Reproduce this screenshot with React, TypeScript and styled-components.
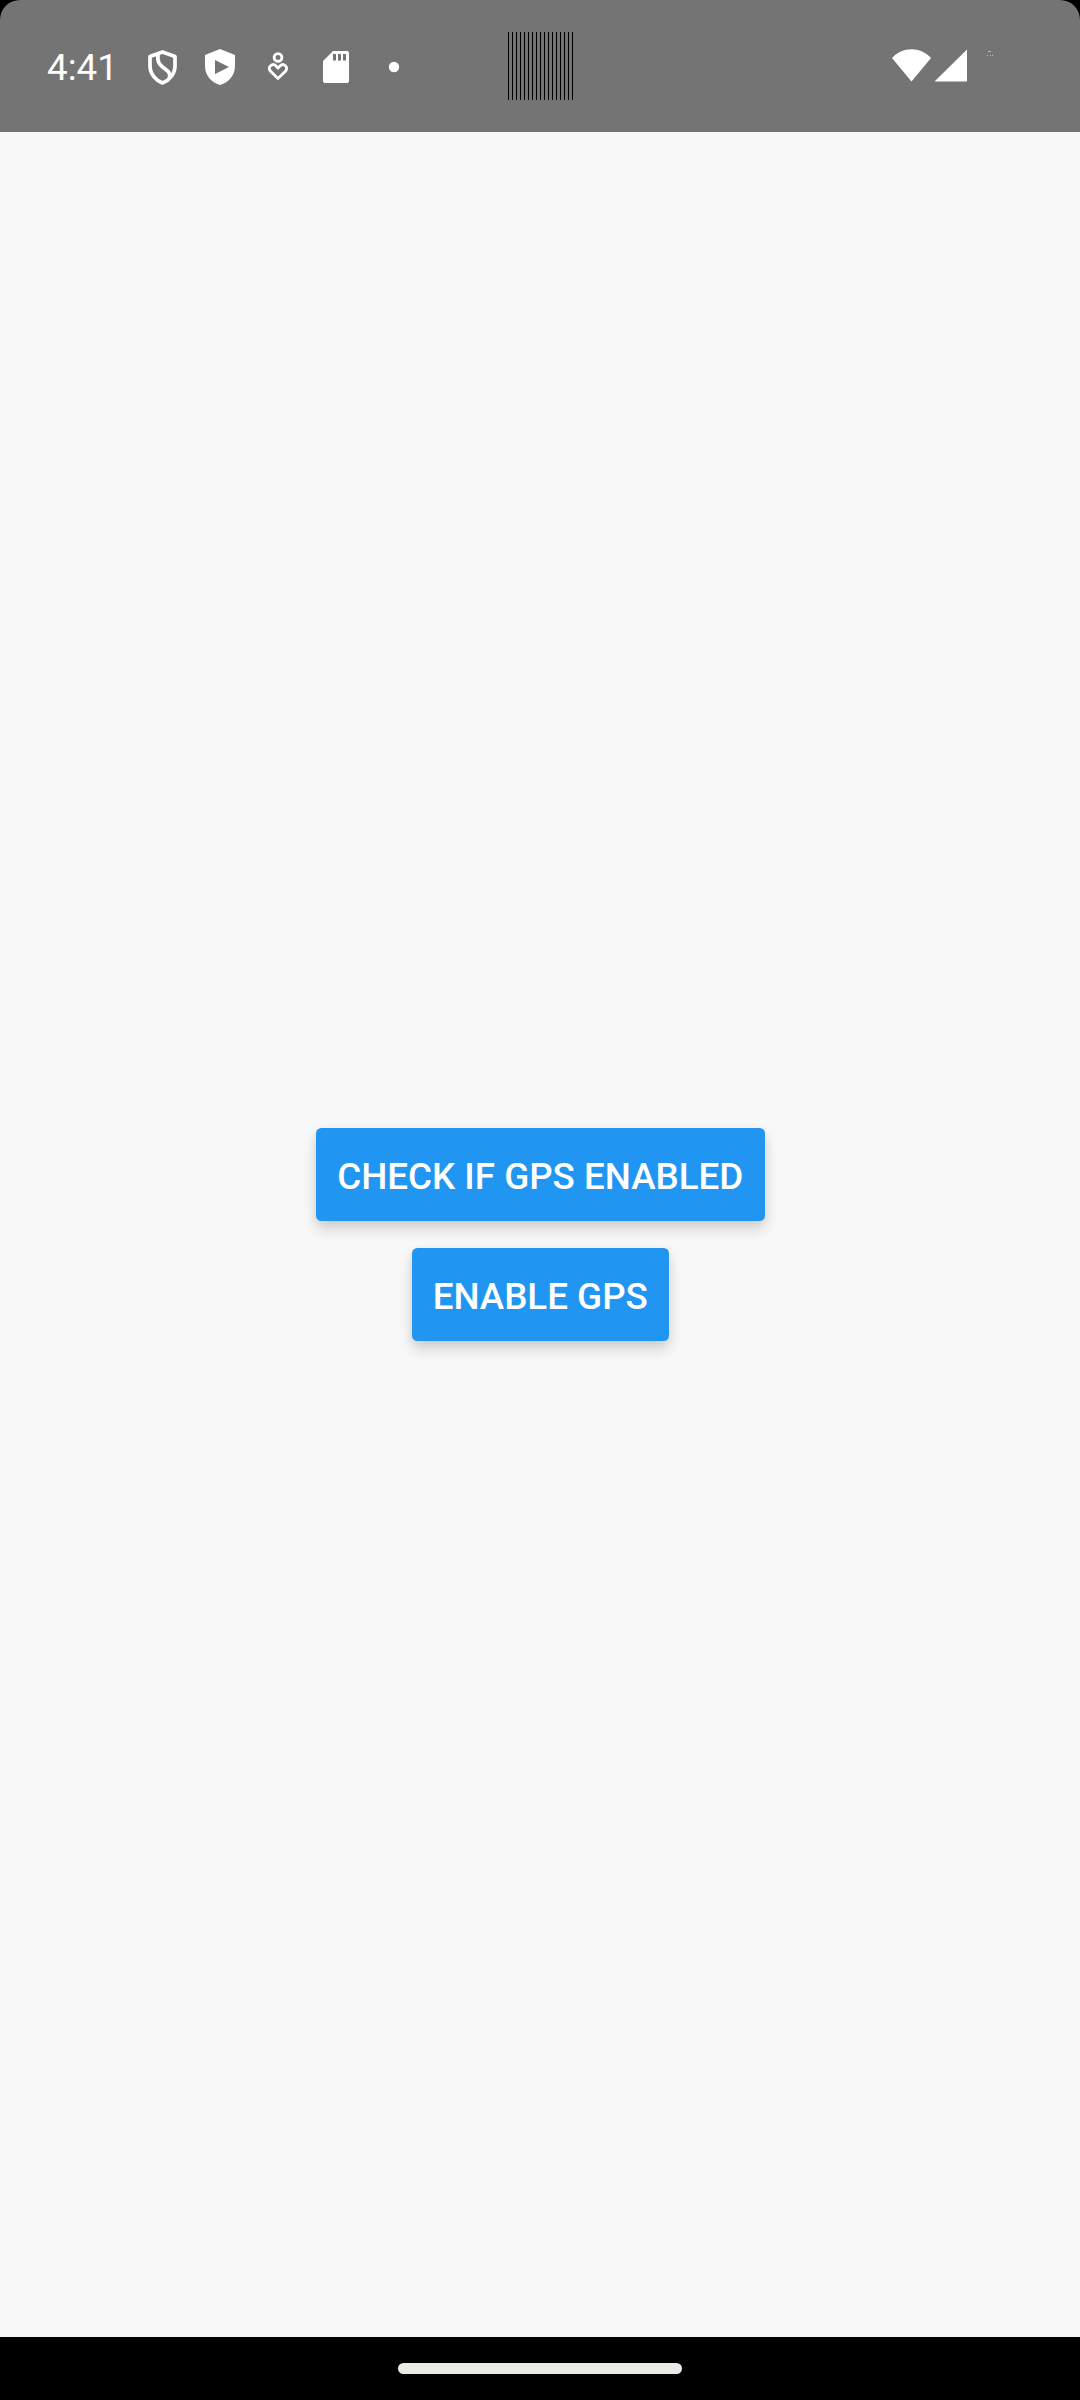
import React from "react";
import styled, { createGlobalStyle } from "styled-components";

const GlobalStyle = createGlobalStyle`
  body { margin: 0; background: #000; font-family: Roboto, "Liberation Sans", sans-serif; }
`;

const Screen = styled.div`
  width: 1080px;
  height: 2400px;
  display: flex;
  flex-direction: column;
  background: #000;
`;

const StatusBar = styled.header`
  position: relative;
  box-sizing: border-box;
  height: 132px;
  padding: 0 86px 0 47px;
  display: flex;
  align-items: center;
  background: #747474;
  border-radius: 20px 20px 0 0;
`;

const Clock = styled.span`
  width: 91px;
  font-size: 36.75px;
  line-height: 46px;
  color: #fff;
  padding-top: 4px;
`;

const Notifications = styled.div`
  flex: 1;
  display: flex;
  align-items: center;
  gap: 10px;
  padding-top: 2px;
`;

const Signals = styled.div`
  display: flex;
  align-items: center;
  gap: 4px;
`;

const Glyph = styled.svg<{ $w?: number; $h?: number }>`
  display: block;
  width: ${(p) => p.$w ?? 48}px;
  height: ${(p) => p.$h ?? 48}px;
`;

const Camera = styled.div`
  position: absolute;
  left: 508px;
  top: 32px;
  width: 65px;
  height: 68px;
  background: repeating-linear-gradient(90deg, #000 0 1px, transparent 1px 4px);
`;

const Content = styled.main`
  flex: 1;
  display: flex;
  flex-direction: column;
  align-items: center;
  justify-content: center;
  gap: 27px;
  padding-left: 1px;
  background: #f8f8f8;
`;

const ActionButton = styled.button`
  height: 93px;
  padding: 4px 21.5px 0 21px;
  border: 0;
  border-radius: 5.25px;
  background: #2096f2;
  color: #fff;
  font: 500 36.75px/46px Roboto, "Liberation Sans", sans-serif;
  text-transform: uppercase;
  white-space: nowrap;
  box-shadow: 0 8px 14px rgba(0, 0, 0, 0.16), 0 1px 8px rgba(0, 0, 0, 0.04);
`;

const NavBar = styled.footer`
  height: 63px;
  display: flex;
  align-items: center;
  justify-content: center;
`;

const HomeHandle = styled.div`
  width: 284px;
  height: 11px;
  border-radius: 6px;
  background: #ebebe6;
`;

export default function App() {
  return (
    <>
      <GlobalStyle />
      <Screen>
        <StatusBar>
          <Clock>4:41</Clock>
          <Notifications>
            <Glyph viewBox="138 43 48 48" fill="none" stroke="#fff" strokeWidth="3.7" strokeLinejoin="round">
              <path d="M162.5 52 L175 56.5 V66 C175 74 169 80.5 162.5 83 C156 80.5 150 74 150 66 V56.5 Z" />
              <path d="M158 54 C157 63 160 65 164.5 68.5 C168.5 71.5 170.5 73 169.5 78" />
            </Glyph>
            <Glyph viewBox="196 43 48 48" fill="#fff">
              <path fillRule="evenodd" d="M220 49 L235 55 V66 C235 75 229 82.5 220 85 C211 82.5 205 75 205 66 V55 Z M215 60 V74 L229 67 Z" />
            </Glyph>
            <Glyph viewBox="254 43 48 48" fill="none" stroke="#fff" strokeWidth="2.8">
              <circle cx="278" cy="57.5" r="3.9" />
              <path d="M278 78.4 L270.6 71.3 C267 67 272.5 62.5 276 66 L278 68 L280 66 C283.5 62.5 289 67 285.4 71.3 Z" />
            </Glyph>
            <Glyph viewBox="312 43 48 48" fill="#fff">
              <path fillRule="evenodd" d="M333 51 H347 Q349 51 349 53 V81 Q349 83 347 83 H325 Q323 83 323 81 V61 Z M333 54 V60.5 H336 V54 Z M338 54 V60.5 H341 V54 Z M343 54 V60.5 H346 V54 Z" />
            </Glyph>
            <Glyph viewBox="370 43 48 48" fill="#fff">
              <circle cx="394" cy="67" r="5.2" />
            </Glyph>
          </Notifications>
          <Signals>
            <Glyph $w={39} $h={34} viewBox="892 49 39 34" fill="#fff">
              <path d="M892 58 C902 46.2 921 46.2 931 58 L911.5 81.5 Z" />
            </Glyph>
            <Glyph $w={33} $h={34} viewBox="935 49 33 34" fill="#fff">
              <path d="M967 49.5 V81.5 H934.5 Z" />
            </Glyph>
            <Glyph $w={22} $h={34} viewBox="972 49 22 34" fill="#c0c090" shapeRendering="crispEdges">
              <path d="M988 51 h3 v1 h-3 z M987 55 h1 v1 h-1 z M990 55 h1 v1 h-1 z M992 55 h1 v1 h-1 z" />
            </Glyph>
          </Signals>
          <Camera />
        </StatusBar>
        <Content>
          <ActionButton>Check if GPS enabled</ActionButton>
          <ActionButton>Enable GPS</ActionButton>
        </Content>
        <NavBar>
          <HomeHandle />
        </NavBar>
      </Screen>
    </>
  );
}
